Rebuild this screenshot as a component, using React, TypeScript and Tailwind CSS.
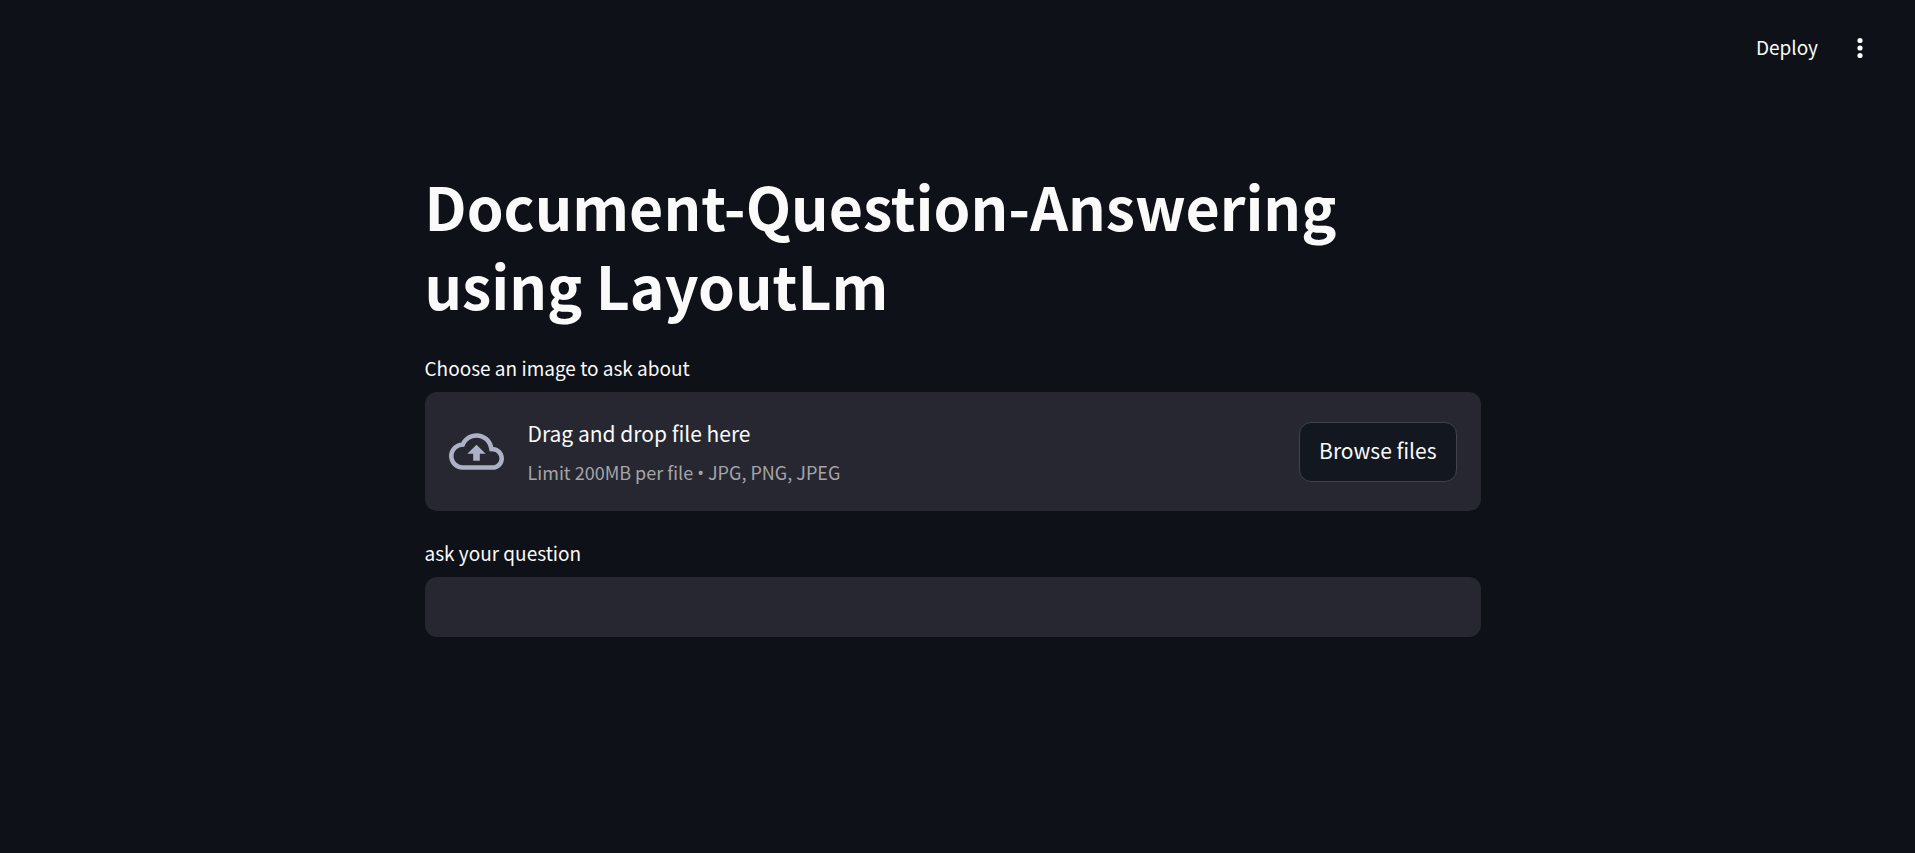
import React, { useRef, useState } from "react";

function MenuDots() {
  return (
    <svg viewBox="0 0 8 24" className="h-6 w-2 fill-current" aria-hidden="true">
      <circle cx="4" cy="4.5" r="2.6" />
      <circle cx="4" cy="12" r="2.6" />
      <circle cx="4" cy="19.5" r="2.6" />
    </svg>
  );
}

function CloudUpload() {
  return (
    <svg viewBox="0 0 24 24" className="size-[55px] shrink-0 fill-[#acb1c6]" aria-hidden="true">
      <path d="M19.35 10.04A7.49 7.49 0 0 0 12 4C9.11 4 6.6 5.64 5.35 8.04A5.994 5.994 0 0 0 0 14c0 3.31 2.69 6 6 6h13c2.76 0 5-2.24 5-5 0-2.64-2.05-4.78-4.65-4.96zM19 18H6c-2.21 0-4-1.79-4-4 0-2.05 1.53-3.76 3.56-3.97l1.07-.11.5-.95A5.469 5.469 0 0 1 12 6c2.62 0 4.88 1.86 5.39 4.43l.3 1.5 1.53.11A2.98 2.98 0 0 1 22 15c0 1.65-1.35 3-3 3zM8 13h2.55v3h2.9v-3H16l-4-4z" />
    </svg>
  );
}

export default function App() {
  const fileInput = useRef<HTMLInputElement>(null);
  const [question, setQuestion] = useState("");

  return (
    <div className="min-h-screen bg-[#0e1117] font-['Noto_Sans_CJK_SC',sans-serif] text-[#fafafa]">
      <header className="flex h-24 items-center justify-end gap-[18px] pr-[39px]">
        <button type="button" className="px-2 pb-0.5 text-[19px] leading-8">
          Deploy
        </button>
        <button type="button" aria-label="Main menu" className="flex w-8 justify-center">
          <MenuDots />
        </button>
      </header>
      <div className="pr-[10px]">
        <main className="mx-auto flex w-full max-w-[1056px] flex-col pt-[70px] pb-24">
          <h1 className="text-[59px] leading-[79px] font-bold">
            Document-Question-Answering using LayoutLm
          </h1>

          <label htmlFor="image-file" className="mt-[30px] mb-[10px] text-[19px] leading-7">
            Choose an image to ask about
          </label>
          <section className="flex min-h-[119px] items-center gap-6 rounded-xl bg-[#262730] px-6">
            <CloudUpload />
            <div className="flex grow flex-col gap-[7px] pt-0.5">
              <p className="text-[21px] leading-8">Drag and drop file here</p>
              <p className="text-[18px] leading-8 text-[#a5a5a8]">
                Limit 200MB per file <span className="font-['Open_Sans',sans-serif]">•</span> JPG, PNG, JPEG
              </p>
            </div>
            <input
              id="image-file"
              ref={fileInput}
              type="file"
              accept=".jpg,.jpeg,.png"
              className="hidden"
            />
            <button
              type="button"
              onClick={() => fileInput.current?.click()}
              className="h-[60px] shrink-0 rounded-xl border border-[#41434b] bg-[#131720] px-[19px] pb-1 text-[21px] leading-8"
            >
              Browse files
            </button>
          </section>

          <label htmlFor="question" className="mt-7 mb-[10px] text-[19px] leading-7">
            ask your question
          </label>
          <input
            id="question"
            type="text"
            value={question}
            onChange={(event) => setQuestion(event.target.value)}
            className="h-[60px] w-full rounded-xl bg-[#262730] px-4 text-[21px] outline-none"
          />
        </main>
      </div>
    </div>
  );
}
